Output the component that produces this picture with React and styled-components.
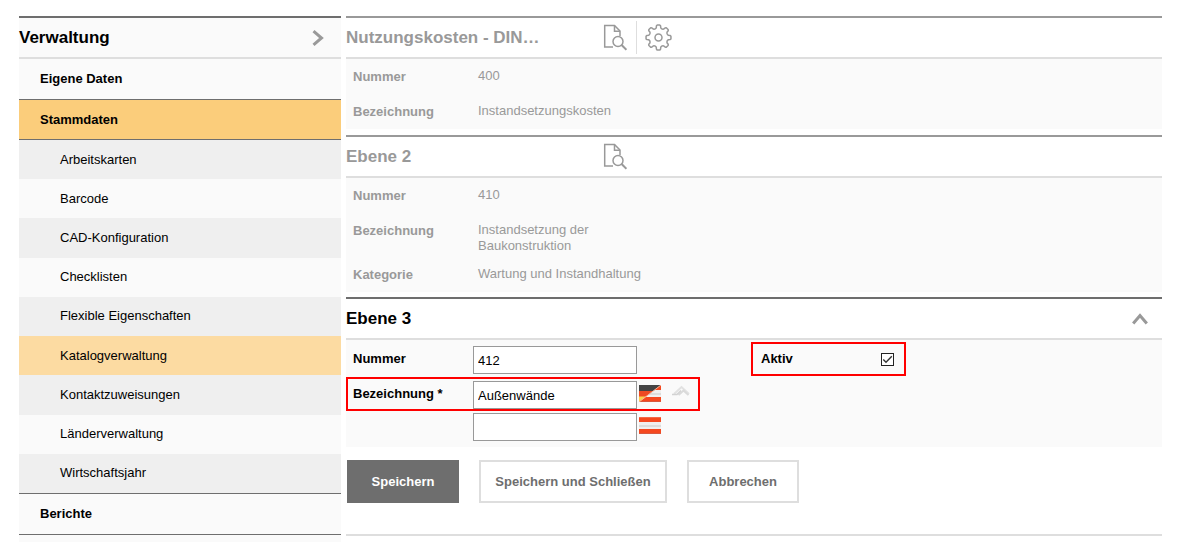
import React from 'react';
import styled, { createGlobalStyle, css } from 'styled-components';

const GlobalStyle = createGlobalStyle`
  * { box-sizing: border-box; }
  body {
    margin: 0;
    background: #fff;
    color: #000;
    font: 13px/16px "Liberation Sans", Arial, sans-serif;
  }
`;

const Page = styled.div`
  display: grid;
  grid-template-columns: 322px minmax(0, 1fr);
  column-gap: 5px;
  min-height: 100vh;
  padding: 16px 16px 0 19px;
`;

const Sidebar = styled.nav`
  display: flex;
  flex-direction: column;
  background: #fafafa;
`;

const Bar = styled.header`
  display: flex;
  align-items: center;
  height: 43px;
  border-top: 2px solid ${(p) => (p.$muted ? '#999' : '#6e6e6e')};
  border-bottom: 2px solid #dedede;
  color: ${(p) => (p.$muted ? '#999' : '#000')};
`;

const Title = styled.h2`
  margin: 0;
  flex: ${(p) => (p.$fill ? '1' : '0 0 248px')};
  font-size: 17px;
  line-height: 20px;
  white-space: nowrap;
`;

const IconButton = styled.button`
  display: flex;
  align-items: center;
  justify-content: center;
  width: 43px;
  height: 33px;
  padding: 0;
  border: 0;
  border-right: 1px solid ${(p) => (p.$divided ? '#dedede' : 'transparent')};
  background: none;
  color: #999;
`;

const NavLink = styled.a`
  display: flex;
  align-items: center;
  height: ${(p) => (p.$active ? '40px' : '41px')};
  padding-left: 21px;
  border-bottom: 1px solid #6e6e6e;
  background: ${(p) => (p.$active ? '#fbcd7b' : 'transparent')};
  color: #000;
  font-weight: bold;
  text-decoration: none;
`;

const SubMenu = styled.div`
  display: flex;
  flex-direction: column;
  height: 354px;
  border-bottom: 1px solid #6e6e6e;
`;

const SubLink = styled.a`
  display: flex;
  flex: 1;
  align-items: center;
  padding-left: 41px;
  color: #000;
  text-decoration: none;
  &:nth-child(odd) { background: #efefef; }
  ${(p) => p.$current && css`&& { background: #fcdba2; }`}
`;

const Main = styled.main`
  min-width: 0;
`;

const Section = styled.section`
  margin-bottom: ${(p) => p.$gap || '0'};
`;

const Details = styled.dl`
  margin: 0;
  background: #fafafa;
  color: #999;
`;

const Detail = styled.div`
  display: grid;
  grid-template-columns: 125px 170px;
  min-height: 35px;
  padding: 9px 0 3px 7px;
`;

const Term = styled.dt`
  padding-top: 1px;
  font-weight: bold;
`;

const Value = styled.dd`
  margin: 0;
`;

const Fields = styled.div`
  display: grid;
  grid-template-columns: 354px 155px;
  column-gap: 51px;
  padding: 2px 0 4px;
  background: #fafafa;
`;

const Column = styled.div`
  display: flex;
  flex-direction: column;
`;

const Field = styled.div`
  display: flex;
  align-items: flex-start;
  border: 2px solid ${(p) => (p.$marked ? '#f00' : 'transparent')};
  padding: ${(p) => (p.$extra ? '0' : '2px')} ${(p) => (p.$inset ? '8px' : '5px')} 0;
  margin-top: ${(p) => (p.$spaced ? '1px' : '0')};
`;

const Label = styled.label`
  flex: 0 0 120px;
  min-height: 28px;
  line-height: 26px;
  font-weight: bold;
`;

const TextInput = styled.input`
  width: 164px;
  height: 28px;
  padding: 0 4px;
  border: 1px solid #999;
  border-radius: 0;
  background: #fff;
  color: #000;
  font: inherit;
`;

const Flag = styled.svg`
  margin: 4px 0 0 2px;
`;

const Collapse = styled.button`
  display: flex;
  margin: 4px 0 0 10px;
  padding: 0;
  border: 0;
  background: none;
`;

const CheckWrap = styled.span`
  position: relative;
  display: flex;
  margin-top: 7px;
`;

const Checkbox = styled.input`
  appearance: none;
  width: 13px;
  height: 13px;
  margin: 0;
  border: 1px solid #222;
  background: #fff;
  & + svg { display: none; }
  &:checked + svg { display: block; }
`;

const CheckMark = styled.svg`
  position: absolute;
  inset: 0;
  pointer-events: none;
`;

const Actions = styled.div`
  display: flex;
  gap: 20px;
  padding: 13px 1px 31px;
  border-bottom: 2px solid #dedede;
`;

const Button = styled.button`
  min-width: ${(p) => (p.$wide ? '188px' : '112px')};
  height: 43px;
  padding: 0 14px;
  border: 2px solid ${(p) => (p.$primary ? '#6e6e6e' : '#dedede')};
  background: ${(p) => (p.$primary ? '#6e6e6e' : '#fff')};
  color: ${(p) => (p.$primary ? '#fff' : '#6e6e6e')};
  font: bold 13px/16px "Liberation Sans", Arial, sans-serif;
`;

const DocSearch = () => (
  <svg width="24" height="27" viewBox="0 0 24 27" fill="none" stroke="currentColor" strokeWidth="1.5">
    <path d="M10 23H1.7V1.5H11.5L17 7V12" />
    <path d="M11.5 1.5V7.2H17" />
    <circle cx="15" cy="17.5" r="5" />
    <path d="M18.6 21L23.4 25.8" strokeWidth="2" />
  </svg>
);

const gearPath = (() => {
  const at = (degrees, radius) => {
    const angle = (degrees * Math.PI) / 180;
    return `${(13.5 + radius * Math.sin(angle)).toFixed(2)} ${(13.5 - radius * Math.cos(angle)).toFixed(2)}`;
  };
  let d = `M${at(-13, 10)}`;
  for (let i = 0; i < 8; i += 1) {
    const c = i * 45;
    d += `L${at(c - 10, 11.8)}Q${at(c - 8, 12.5)} ${at(c - 5, 12.5)}L${at(c + 5, 12.5)}Q${at(c + 8, 12.5)} ${at(c + 10, 11.8)}`;
    d += `L${at(c + 13, 10)}Q${at(c + 22.5, 8.6)} ${at(c + 32, 10)}`;
  }
  return `${d}Z`;
})();

const Gear = () => (
  <svg width="27" height="27" viewBox="0 0 27 27" fill="none" stroke="currentColor" strokeWidth="1.5" strokeLinejoin="round">
    <path d={gearPath} />
    <circle cx="13.5" cy="13.5" r="3.5" />
  </svg>
);

const ChevronRight = () => (
  <svg width="16" height="16" viewBox="0 0 16 16" fill="none" stroke="#999" strokeWidth="3">
    <path d="M2.5 1.2L10.5 8L2.5 14.8" />
  </svg>
);

const ChevronUp = () => (
  <svg width="16" height="12" viewBox="0 0 16 12" fill="none" stroke="#999" strokeWidth="3">
    <path d="M1.2 10.5L8 2.5L14.8 10.5" />
  </svg>
);

const DoubleChevron = () => (
  <svg width="20" height="12" viewBox="0 0 20 12" fill="none">
    <path d="M3 9L10.5 2L18 9" stroke="#e2e2e2" strokeWidth="2" />
    <path d="M7.5 10L12.5 5.5L17.5 10" stroke="#dadada" strokeWidth="2" />
    <path d="M1 9.5H6L10 5.5" stroke="#d2d2d2" strokeWidth="1.5" />
  </svg>
);

const AustriaStripes = () => (
  <>
    <rect width="22" height="17" fill="#f5481f" />
    <rect width="22" height="1" fill="#f4694b" />
    <rect y="5" width="22" height="7" fill="#f0efee" />
    <rect y="8" width="22" height="2" fill="#dcdcda" />
    <rect y="16" width="22" height="1" fill="#d9583f" />
  </>
);

const menu = [
  'Arbeitskarten', 'Barcode', 'CAD-Konfiguration', 'Checklisten', 'Flexible Eigenschaften',
  'Katalogverwaltung', 'Kontaktzuweisungen', 'Länderverwaltung', 'Wirtschaftsjahr',
];

const DetailList = ({ items }) => (
  <Details>
    {items.map(([term, value]) => (
      <Detail key={term}>
        <Term>{term}</Term>
        <Value>{value}</Value>
      </Detail>
    ))}
  </Details>
);

export default function App() {
  return (
    <>
      <GlobalStyle />
      <Page>
        <Sidebar>
          <Bar>
            <Title $fill>Verwaltung</Title>
            <IconButton aria-label="Menü"><ChevronRight /></IconButton>
          </Bar>
          <NavLink href="#eigene-daten">Eigene Daten</NavLink>
          <NavLink href="#stammdaten" $active>Stammdaten</NavLink>
          <SubMenu>
            {menu.map((name) => (
              <SubLink key={name} href={`#${name}`} $current={name === 'Katalogverwaltung'}>{name}</SubLink>
            ))}
          </SubMenu>
          <NavLink href="#berichte">Berichte</NavLink>
        </Sidebar>

        <Main>
          <Section $gap="6px">
            <Bar $muted>
              <Title>Nutzungskosten - DIN…</Title>
              <IconButton $divided aria-label="Details"><DocSearch /></IconButton>
              <IconButton aria-label="Einstellungen"><Gear /></IconButton>
            </Bar>
            <DetailList items={[['Nummer', '400'], ['Bezeichnung', 'Instandsetzungskosten']]} />
          </Section>

          <Section $gap="5px">
            <Bar $muted>
              <Title>Ebene 2</Title>
              <IconButton aria-label="Details"><DocSearch /></IconButton>
            </Bar>
            <DetailList
              items={[
                ['Nummer', '410'],
                ['Bezeichnung', <>Instandsetzung der<br />Baukonstruktion</>],
                ['Kategorie', 'Wartung und Instandhaltung'],
              ]}
            />
          </Section>

          <Section>
            <Bar>
              <Title $fill>Ebene 3</Title>
              <IconButton aria-label="Einklappen"><ChevronUp /></IconButton>
            </Bar>
            <Fields>
              <Column>
                <Field>
                  <Label htmlFor="nummer">Nummer</Label>
                  <TextInput id="nummer" defaultValue="412" />
                </Field>
                <Field $marked $spaced>
                  <Label htmlFor="bezeichnung">Bezeichnung *</Label>
                  <TextInput id="bezeichnung" defaultValue="Außenwände" />
                  <Flag width="22" height="17" viewBox="0 0 22 17">
                    <AustriaStripes />
                    <path d="M0 0H22L0 17Z" fill="#ee4a22" />
                    <path d="M0 0H22L14.2 6H0Z" fill="#444" />
                    <path d="M0 11.5H7.1L0 17Z" fill="#fbd04a" />
                    <path d="M0 17L22 0" stroke="#f6b49a" strokeWidth="1" />
                  </Flag>
                  <Collapse aria-label="Sprachen einklappen"><DoubleChevron /></Collapse>
                </Field>
                <Field $extra>
                  <Label htmlFor="bezeichnung-at" aria-label="Bezeichnung Österreich" />
                  <TextInput id="bezeichnung-at" />
                  <Flag width="22" height="17" viewBox="0 0 22 17"><AustriaStripes /></Flag>
                </Field>
              </Column>
              <Column>
                <Field $marked $inset>
                  <Label htmlFor="aktiv">Aktiv</Label>
                  <CheckWrap>
                    <Checkbox id="aktiv" type="checkbox" defaultChecked />
                    <CheckMark width="13" height="13" viewBox="0 0 13 13" fill="none" stroke="#333" strokeWidth="1.4">
                      <path d="M2.3 6.5L5 9.3L10.8 3.3" />
                    </CheckMark>
                  </CheckWrap>
                </Field>
              </Column>
            </Fields>
            <Actions>
              <Button $primary>Speichern</Button>
              <Button $wide>Speichern und Schließen</Button>
              <Button>Abbrechen</Button>
            </Actions>
          </Section>
        </Main>
      </Page>
    </>
  );
}
